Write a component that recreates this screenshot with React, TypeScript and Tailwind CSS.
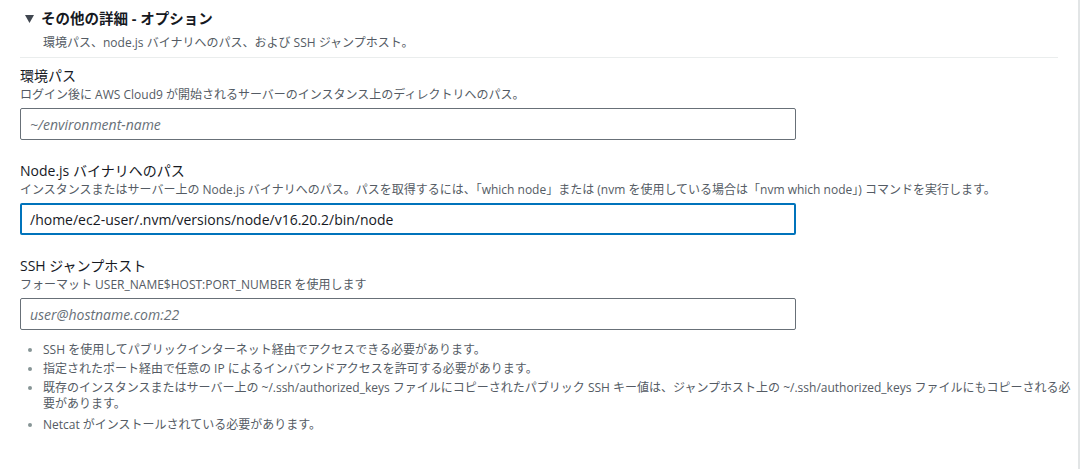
import React from "react";

const font = { fontFamily: '"Open Sans", "Noto Sans CJK JP", sans-serif' };

function Field({ label, desc, children }: { label: string; desc: React.ReactNode; children: React.ReactNode }) {
  return (
    <div className="flex flex-col">
      <div className="h-[22px] text-[14px] leading-[22px] text-[#16191f] whitespace-nowrap">{label}</div>
      <div className="h-[16px] text-[12px] leading-[16px] text-[#545b64] whitespace-nowrap">{desc}</div>
      <div className="mt-[5px]">{children}</div>
    </div>
  );
}

export default function App() {
  return (
    <div className="w-[1082px] h-[469px] bg-white flex" style={font}>
      <div className="w-[1080px] h-full border-r-2 border-[#e2e5e6] pl-[20px] pr-[20px]">
        <div className="flex items-center pt-[8px] h-[30px] pl-[5px]">
          <svg width="9" height="8" viewBox="0 0 9 8" className="mr-[7px]">
            <polygon points="0,0 9,0 4.5,8" fill="#414750" />
          </svg>
          <span className="text-[14.5px] font-bold text-[#16191f] leading-[22px]">その他の詳細 - オプション</span>
        </div>
        <div className="h-[16px] pl-[23px] mt-[5px] text-[12px] leading-[16px] text-[#545b64]">
          環境パス、node.js バイナリへのパス、および SSH ジャンプホスト。
        </div>
        <div className="mt-[6px] h-px bg-[#eaeded]" />
        <div className="mt-[7px] flex flex-col gap-[20px]">
          <Field label="環境パス" desc="ログイン後に AWS Cloud9 が開始されるサーバーのインスタンス上のディレクトリへのパス。">
            <div className="w-[776px] h-[32px] border border-[#687078] rounded-[2px] flex items-center pl-[9px] text-[14px] italic text-[#687078]">
              ~/environment-name
            </div>
          </Field>
          <Field
            label="Node.js バイナリへのパス"
            desc="インスタンスまたはサーバー上の Node.js バイナリへのパス。パスを取得するには、「which node」または (nvm を使用している場合は「nvm which node」) コマンドを実行します。"
          >
            <div className="w-[776px] h-[32px] border-2 border-[#0073bb] rounded-[2px] flex items-center pl-[8px] text-[14px] text-[#16191f]">
              /home/ec2-user/.nvm/versions/node/v16.20.2/bin/node
            </div>
          </Field>
          <Field label="SSH ジャンプホスト" desc="フォーマット USER_NAME$HOST:PORT_NUMBER を使用します">
            <div className="w-[776px] h-[32px] border border-[#687078] rounded-[2px] flex items-center pl-[9px] text-[14px] italic text-[#687078]">
              user@hostname.com:22
            </div>
          </Field>
        </div>
        <ul className="mt-[12px] pl-[23px] mr-[-16px] flex flex-col gap-[3px] text-[12px] leading-[16px] text-[#545b64] list-disc marker:text-[#879596]">
          <li>SSH を使用してパブリックインターネット経由でアクセスできる必要があります。</li>
          <li>指定されたポート経由で任意の IP によるインバウンドアクセスを許可する必要があります。</li>
          <li>
            既存のインスタンスまたはサーバー上の ~/.ssh/authorized_keys ファイルにコピーされたパブリック SSH キー値は、ジャンプホスト上の ~/.ssh/authorized_keys ファイルにもコピーされる必要があります。
          </li>
          <li className="mt-[2px]">Netcat がインストールされている必要があります。</li>
        </ul>
      </div>
    </div>
  );
}
